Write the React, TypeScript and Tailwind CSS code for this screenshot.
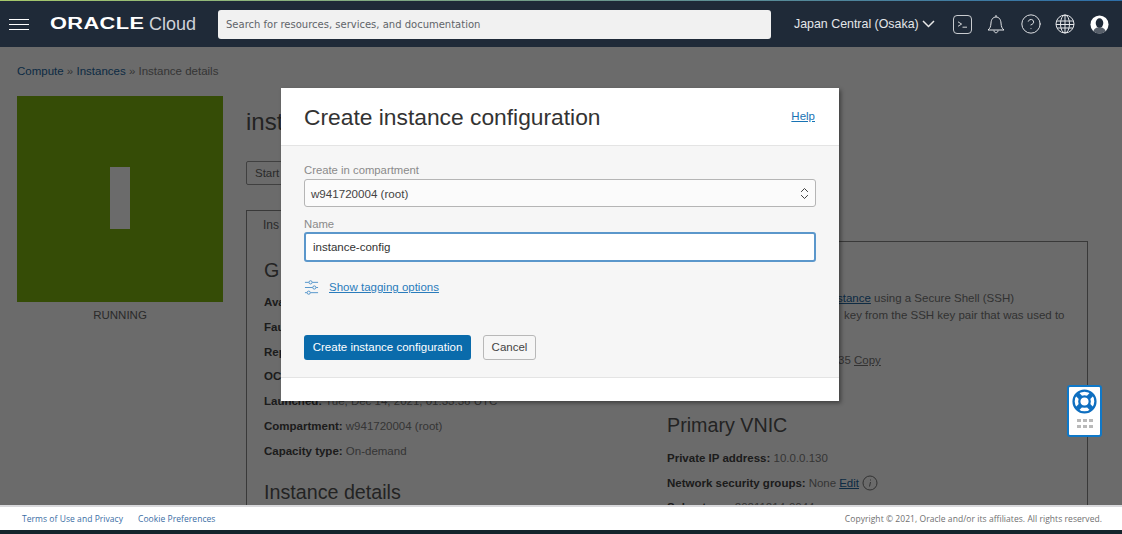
import { ChevronsUpDown, CircleHelp } from "lucide-react";

function Logo() {
  return (
    <div className="flex items-center text-white font-['Liberation_Sans',sans-serif] whitespace-nowrap">
      <span className="w-[99px] text-[16px] font-bold tracking-[0.3px] scale-x-[1.36] origin-left">ORACLE</span>
      <span className="text-[18px] text-[#cfd3d8]">Cloud</span>
    </div>
  );
}

function TopBar() {
  return (
    <header className="h-[47px] shrink-0 bg-[#1f2a38] flex flex-col text-white">
      <div className="h-px bg-gradient-to-r from-[#a6c86a] via-[#6f9a8a] to-[#2d6ea8]" />
      <div className="flex-1 flex items-center">
        <div className="ml-[9px] w-[20px] flex flex-col gap-[4px]">
          <div className="h-px bg-white" />
          <div className="h-px bg-white" />
          <div className="h-px bg-white" />
        </div>
        <div className="ml-[21px] w-[168px]">
          <Logo />
        </div>
        <div className="w-[553px] h-[29px] rounded-[3px] bg-[#f1f1f1] flex items-center pl-[8px] pt-px text-[10px] text-[#5f6469] font-['DejaVu_Sans',sans-serif] whitespace-nowrap">
          Search for resources, services, and documentation
        </div>
        <div className="ml-[23px] pt-px flex items-center text-[12.4px] text-[#e4e6e9] font-['Liberation_Sans',sans-serif] whitespace-nowrap">
          Japan Central (Osaka)
          <svg viewBox="0 0 13 8" className="ml-[3px] w-[13px] h-[8px]" fill="none" stroke="#e8e8e8" strokeWidth="1.5">
            <path d="M1 1l5.5 5.5L12 1" />
          </svg>
        </div>
        <div className="ml-[18px] w-[19px] h-[19px] rounded-[4px] border border-[#c9ccd0] flex items-center justify-center">
          <svg viewBox="0 0 12 10" className="w-[11px] h-[9px]" fill="none" stroke="#e8e8e8" strokeWidth="1">
            <path d="M1 2l4 2.5L1 7M6 8h5" />
          </svg>
        </div>
        <svg viewBox="0 0 18 20" className="ml-[15px] w-[18px] h-[20px]" fill="none" stroke="#e4e6e9" strokeWidth="1">
          <path d="M1 16c2-1.500 2.800-3.500 3-7 .2-3.500 2-6 5-6s4.800 2.500 5 6c.2 3.500 1 5.500 3 7z" />
          <path d="M9 1v2M7 16.500c0 3 4 3 4 0" />
        </svg>
        <CircleHelp className="ml-[15px] w-[22px] h-[22px] text-[#e4e6e9]" strokeWidth={1.05} />
        <svg viewBox="0 0 20 20" className="ml-[13px] w-[20px] h-[20px]" fill="none" stroke="#e4e6e9" strokeWidth="1">
          <circle cx="10" cy="10" r="9" />
          <ellipse cx="10" cy="10" rx="4.500" ry="9" />
          <path d="M10 1v18M1.500 7h17M1 10.500h18M2 14h16" />
        </svg>
        <svg viewBox="0 0 20 20" className="ml-[15px] w-[19px] h-[19px]">
          <circle cx="10" cy="10" r="9.500" fill="#fff" />
          <ellipse cx="10" cy="8.500" rx="4" ry="5" fill="#1f2a38" />
          <path d="M3.500 17c1.500-3.500 4-4 6.500-4s5 .5 6.500 4a9.500 9.500 0 0 1-13 0z" fill="#1f2a38" opacity="0.75" />
        </svg>
      </div>
    </header>
  );
}

function Field({ label, value }: { label: string; value?: string }) {
  return (
    <p className="text-[11.5px] leading-[14px] text-[#808080] whitespace-nowrap">
      <b className="text-[#444]">{label}</b> {value}
    </p>
  );
}

function PageContent() {
  return (
    <div className="flex-1 min-h-0 overflow-hidden bg-white font-['Liberation_Sans',sans-serif] pl-[17px]">
      <div className="pt-[17px] text-[11.5px] leading-[14px] text-[#808080] whitespace-nowrap">
        <span className="text-[#22669f]">Compute</span> » <span className="text-[#22669f]">Instances</span> » Instance details
      </div>
      <div className="mt-[18px] flex">
        <div className="w-[206px] shrink-0">
          <div className="h-[206px] bg-[#7eb50f] flex items-center justify-center">
            <div className="w-[20px] h-[62px] bg-white mb-[2px]" />
          </div>
          <div className="mt-[6px] text-center text-[11.5px] leading-[14px] text-[#666]">RUNNING</div>
        </div>
        <div className="ml-[23px] flex-1 min-w-0">
          <h1 className="mt-[12px] text-[24px] leading-[28px] text-[#555]">inst</h1>
          <div className="mt-[25px] h-[24px] w-[60px] rounded-[2px] border border-[#999] text-[11.5px] text-[#666] pl-[8px] leading-[22px]">Start</div>
          <div className="mt-[25px] relative z-10 -mb-px h-[32px] w-[160px] border border-b-0 border-[#888] bg-white pl-[16px] pt-[7px] text-[12px] leading-[15px] text-[#666]">Ins</div>
          <div className="mr-[34px] border border-[#888] h-[300px]">
            <div className="grid grid-cols-[420px_1fr]">
              <div className="pl-[17px]">
                <div className="mt-[16px] text-[19.7px] leading-[24px] text-[#555]">G</div>
                <div className="mt-[13px] flex flex-col gap-[10.8px]">
                  <Field label="Ava" />
                  <Field label="Fau" />
                  <Field label="Rep" />
                  <Field label="OC" />
                  <Field label="Launched:" value="Tue, Dec 14, 2021, 01:33:36 UTC" />
                  <Field label="Compartment:" value="w941720004 (root)" />
                  <Field label="Capacity type:" value="On-demand" />
                </div>
                <div className="mt-[22px] text-[19.7px] leading-[24px] text-[#555]">Instance details</div>
              </div>
              <div>
                <div className="mt-[48px] pl-[170px] text-[11.5px] leading-[17px] text-[#777] whitespace-nowrap">
                  <p><span className="underline text-[#22669f]">stance</span> using a Secure Shell (SSH)</p>
                  <p className="pl-[7px]">key from the SSH key pair that was used to</p>
                </div>
                <div className="mt-[29px] pl-[171px] text-[11.5px] leading-[14px] text-[#777] whitespace-nowrap">
                  35 <span className="underline">Copy</span>
                </div>
                <div className="mt-[46px] text-[19.7px] leading-[24px] text-[#555]">Primary VNIC</div>
                <div className="mt-[14px] flex flex-col gap-[10.5px]">
                  <Field label="Private IP address:" value="10.0.0.130" />
                  <p className="h-[14px] text-[11.5px] leading-[14px] text-[#808080] whitespace-nowrap flex items-center gap-[3px]">
                    <b className="text-[#444]">Network security groups:</b> None <span className="underline text-[#22669f]">Edit</span>
                    <svg viewBox="0 0 16 16" className="w-[16px] h-[16px] shrink-0" fill="none" stroke="#777">
                      <circle cx="8" cy="8" r="7" />
                      <path d="M8.500 7l-1 4.500M8.500 4.500v1" />
                    </svg>
                  </p>
                  <Field label="Subnet:" value="vcn-20211214-0044" />
                </div>
              </div>
            </div>
          </div>
        </div>
      </div>
    </div>
  );
}

function Modal() {
  return (
    <div className="absolute left-[281px] top-[88px] w-[558px] h-[313px] bg-[#f6f6f6] shadow-[2px_2px_4px_rgba(0,0,0,0.4)] flex flex-col font-['Liberation_Sans',sans-serif] z-20">
      <div className="h-[58px] shrink-0 bg-white border-b border-[#e4e4e4] flex items-center justify-between pl-[23px] pr-[24px]">
        <h2 className="text-[22.8px] leading-[28px] text-[#333]">Create instance configuration</h2>
        <span className="text-[11.5px] text-[#1873b4] underline">Help</span>
      </div>
      <div className="flex-1 px-[23px]">
        <label className="block mt-[17px] text-[11.3px] leading-[14px] text-[#8a8a8a]">Create in compartment</label>
        <div className="mt-[2px] h-[28px] rounded-[3px] border border-[#b5b5b5] bg-[#fbfbfb] flex items-center justify-between pl-[6px] pr-[3px] pt-px text-[11.6px] text-[#444]">
          w941720004 (root)
          <ChevronsUpDown className="w-[15px] h-[15px] text-[#333]" strokeWidth={1.5} />
        </div>
        <label className="block mt-[10px] text-[11.3px] leading-[14px] text-[#8a8a8a]">Name</label>
        <input
          readOnly
          value="instance-config"
          className="mt-[1px] block w-full h-[30px] rounded-[3px] border-2 border-[#5b97cb] bg-white pl-[7px] text-[11.5px] text-[#333] outline-none"
        />
        <div className="mt-[17px] flex items-center gap-[10px] h-[16px]">
          <svg viewBox="0 0 16 16" className="w-[15px] h-[15px]" fill="none" stroke="#3b86c4" strokeWidth="0.9">
            <path d="M1 2.500h4M9 2.500h6M1 8h8M13 8h2M1 13.500h2M7 13.500h8" />
            <circle cx="7" cy="2.500" r="1.700" />
            <circle cx="11" cy="8" r="1.700" />
            <circle cx="5" cy="13.500" r="1.700" />
          </svg>
          <span className="pt-[2px] text-[11.5px] text-[#2a7cbc] underline">Show tagging options</span>
        </div>
        <div className="mt-[40px] flex items-center gap-[12px]">
          <button className="h-[25px] w-[167px] rounded-[3px] bg-[#0a6bab] text-white text-[11.5px] whitespace-nowrap">
            Create instance configuration
          </button>
          <button className="h-[25px] w-[53px] rounded-[3px] border border-[#b8b8b8] bg-[#f6f6f6] text-[#444] text-[11.5px]">
            Cancel
          </button>
        </div>
      </div>
      <div className="h-[24px] shrink-0 bg-white border-t border-[#e4e4e4]" />
    </div>
  );
}

function HelpWidget() {
  return (
    <div className="absolute left-[1067px] top-[385px] w-[35px] h-[52px] rounded-[3px] bg-white border-2 border-[#0f78c8] flex flex-col items-center z-20">
      <svg viewBox="0 0 24 24" className="mt-[2px] w-[25px] h-[25px]" fill="none" stroke="#0f6fc0" strokeWidth="2.200">
        <circle cx="12" cy="12" r="10.500" />
        <circle cx="12" cy="12" r="5" />
        <path d="M5 5l4 4M19 5l-4 4M5 19l4-4M19 19l-4-4" strokeWidth="4.500" />
      </svg>
      <div className="mt-[5px] grid grid-cols-3 gap-x-[2px] gap-y-[3px]">
        {Array.from({ length: 6 }).map((_, i) => (
          <div key={i} className="w-[4px] h-[3px] bg-[#b9b9b9]" />
        ))}
      </div>
    </div>
  );
}

function Footer() {
  return (
    <footer className="absolute left-0 right-0 bottom-0 z-30">
      <div className="h-[25px] bg-white border-t-2 border-t-[#d9d9dc] flex items-center justify-between pl-[22px] pr-[20px] pt-px text-[8.5px] tracking-[0.05px] font-['Open_Sans',sans-serif]">
        <div className="flex gap-[15px] text-[#3b6ea5]">
          <span>Terms of Use and Privacy</span>
          <span>Cookie Preferences</span>
        </div>
        <span className="text-[#707070]">Copyright © 2021, Oracle and/or its affiliates. All rights reserved.</span>
      </div>
      <div className="h-[4px] bg-[#14252c]" />
    </footer>
  );
}

export default function App() {
  return (
    <div className="relative w-[1122px] h-[534px] overflow-hidden flex flex-col bg-white">
      <TopBar />
      <PageContent />
      <div className="absolute left-0 right-0 top-[47px] bottom-0 bg-black/58 z-10" />
      <Modal />
      <HelpWidget />
      <Footer />
    </div>
  );
}
